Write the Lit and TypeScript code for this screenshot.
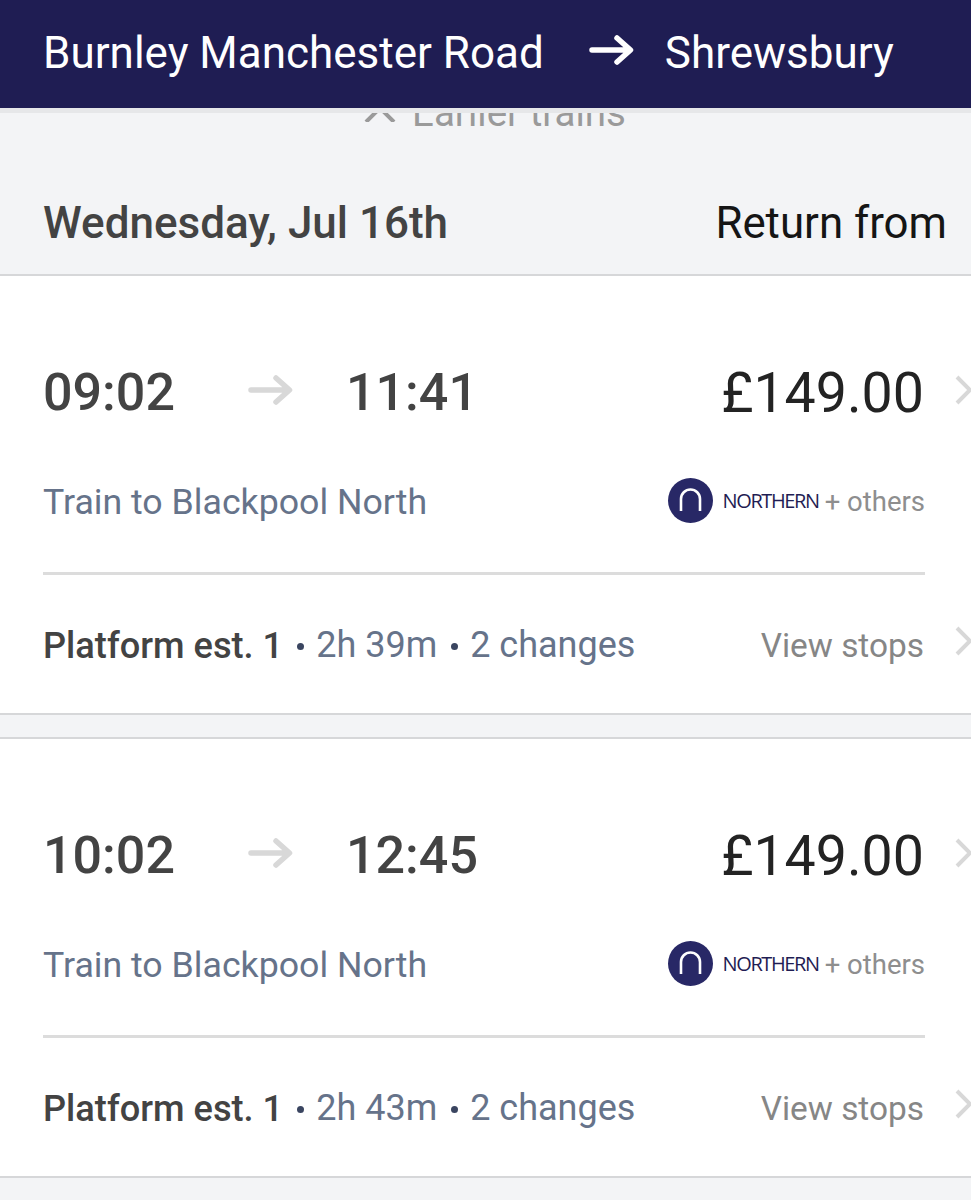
import { LitElement, html, css, svg } from "lit";
import { customElement } from "lit/decorators.js";

const chevron = svg`<path d="M2 2 L15 15 L2 28" fill="none" stroke="#d8d8d8" stroke-width="4"/>`;
const arrow = svg`<path d="M3 18 H41 M28 6 L41.5 18 L28 30" fill="none" stroke-width="5.5" stroke-linecap="round" stroke-linejoin="round"/>`;

const trains = [
  { dep: "09:02", arr: "11:41", dur: "2h 39m" },
  { dep: "10:02", arr: "12:45", dur: "2h 43m" },
];

@customElement("app-root")
export class AppRoot extends LitElement {
  static styles = css`
    :host { display: block; width: 971px; height: 1200px; overflow: hidden; background: #f3f4f6;
      font-family: Roboto, "Liberation Sans", sans-serif; }
    .header { height: 108px; background: #1f1d53; color: #fff; display: flex; align-items: center;
      padding: 0 0 3px 43px; box-sizing: border-box; font-size: 44px; }
    .header .arrow { width: 46px; height: 36px; margin: 0 30px 0 45px; stroke: #fff; position: relative; top: -3px; }
    .shade { height: 5px; background: #e6e7e9; }
    .earlier { height: 20px; overflow: hidden; display: flex; justify-content: center; gap: 16px;
      color: #9a9a9a; font-size: 38.5px; line-height: 40px; padding-left: 19px; }
    .earlier span { display: block; margin-top: -20px; }
    .earlier svg { width: 32px; height: 16px; margin-top: -7px; }
    .date { height: 143px; box-sizing: border-box; padding: 65px 24px 0 43px; display: flex; justify-content: space-between;
      border-bottom: 2px solid #d6d7d9; align-items: flex-start; }
    .date b { font-size: 44px; line-height: 50px; font-weight: 500; color: #434343; }
    .date span { font-size: 43.8px; line-height: 50px; color: #151515; }
    .card { background: #fff; border-bottom: 2px solid #d6d7d9; height: 439px; box-sizing: border-box; padding: 87px 0 0 43px; }
    .card + .card { border-top: 2px solid #d6d7d9; margin-top: 22px; height: 441px; padding-top: 87px; }
    .row { display: flex; align-items: center; position: relative; padding-right: 47px; }
    .times { height: 60px; }
    .time { font-size: 52px; font-weight: 500; color: #434343; width: 206px; line-height: 60px; }
    .time.arr { width: auto; }
    .times .arrow { width: 46px; height: 36px; stroke: #d8d8d8; margin-right: 52px; margin-left: -1px; position: relative; top: -3px; }
    .price { margin-left: auto; font-size: 55.5px; color: #232323; line-height: 60px; position: relative; top: 1px; }
    .chev { position: absolute; right: -2px; top: 12px; width: 18px; height: 30px; }
    .info { height: 48px; margin-top: 55px; justify-content: space-between; padding-right: 46px; }
    .to { font-size: 35.7px; color: #66738a; }
    .op { display: flex; align-items: center; margin-top: -2px; }
    .logo { width: 45px; height: 45px; margin-right: 10px; position: relative; top: -1px; }
    .north { font-family: "Open Sans", Lato, sans-serif; font-size: 20px; color: #1f1d53; letter-spacing: -1.4px; margin-right: 6px; position: relative; top: -1px; }
    .oth { font-size: 27.5px; color: #8e8e8e; }
    hr { border: 0; height: 3px; background: #dcdcdc; margin: 46px 46px 0 0; }
    .foot { height: 60px; margin-top: 40px; }
    .plat { font-size: 36.2px; font-weight: 500; color: #434343; }
    .dot { width: 7px; height: 7px; border-radius: 50%; background: #3a4560; margin: 2px 12px 0 14px; }
    .meta { font-size: 36px; color: #66738a; }
    .view { margin-left: auto; font-size: 33.4px; color: #868686; }
    .foot .chev { top: 11px; }
  `;

  private renderCard(t: { dep: string; arr: string; dur: string }) {
    return html`<section class="card">
      <div class="row times">
        <div class="time">${t.dep}</div>
        <svg class="arrow" viewBox="0 0 46 36">${arrow}</svg>
        <div class="time arr">${t.arr}</div>
        <div class="price">£149.00</div>
        <svg class="chev" viewBox="0 0 18 30">${chevron}</svg>
      </div>
      <div class="row info">
        <div class="to">Train to Blackpool North</div>
        <div class="op">
          <svg class="logo" viewBox="0 0 45 45">
            <circle cx="22.5" cy="22.5" r="22.5" fill="#282866"></circle>
            <path d="M13 33 V21 a9.5 9.5 0 0 1 19 0 V33" fill="none" stroke="#fff" stroke-width="2.6"></path>
          </svg>
          <span class="north">NORTHERN</span>
          <span class="oth">+ others</span>
        </div>
      </div>
      <hr />
      <div class="row foot">
        <span class="plat">Platform est. 1</span><span class="dot"></span>
        <span class="meta">${t.dur}</span><span class="dot"></span>
        <span class="meta">2 changes</span>
        <span class="view">View stops</span>
        <svg class="chev" viewBox="0 0 18 30">${chevron}</svg>
      </div>
    </section>`;
  }

  render() {
    return html`
      <div class="header">
        <span>Burnley Manchester Road</span>
        <svg class="arrow" viewBox="0 0 46 36">${arrow}</svg>
        <span>Shrewsbury</span>
      </div>
      <div class="shade"></div>
      <div class="earlier">
        <svg viewBox="0 0 32 16"><path d="M2 16 L16 2 L30 16" fill="none" stroke="#9a9a9a" stroke-width="4"></path></svg>
        <span>Earlier trains</span>
      </div>
      <div class="date"><b>Wednesday, Jul 16th</b><span>Return from</span></div>
      ${trains.map((t) => this.renderCard(t))}
    `;
  }
}
